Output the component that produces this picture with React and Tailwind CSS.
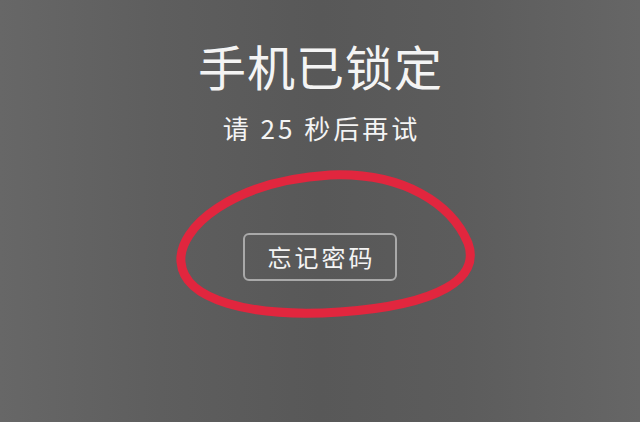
export default function App() {
  return (
    <div
      className="relative w-[640px] h-[422px] overflow-hidden bg-[linear-gradient(to_right,#676767_0%,#5e5e5e_25%,#585858_50%,#5c5c5c_72%,#666666_100%)] text-[#f4f4f4]"
      style={{ fontFamily: '"Noto Sans CJK SC", "Noto Sans", sans-serif' }}
    >
      <div className="flex flex-col items-center pt-[41px]">
        <h1 className="text-[48px] leading-none font-normal tracking-[1px] pl-[1px]">手机已锁定</h1>
        <p className="mt-[26px] text-[26px] leading-none tracking-[3px] pl-[3px]">请 25 秒后再试</p>
        <button className="mt-[92px] w-[154px] h-[48px] rounded-[6px] border-2 border-[#a9a9a9] text-[24px] leading-none tracking-[3px] pl-[3px] text-[#f4f4f4]">
          忘记密码
        </button>
      </div>

      {/* annotation circled around the button */}
      <svg className="absolute inset-0 pointer-events-none" width="640" height="422" viewBox="0 0 640 422">
        <path
          d="M 330 175 C 405 172, 452 205, 468 243 C 481 278, 440 305, 340 312 C 250 318, 184 300, 181 262 C 178 228, 232 181, 330 175 Z"
          fill="none"
          stroke="#e1263e"
          strokeWidth="9"
          strokeLinecap="round"
        />
      </svg>
    </div>
  );
}
